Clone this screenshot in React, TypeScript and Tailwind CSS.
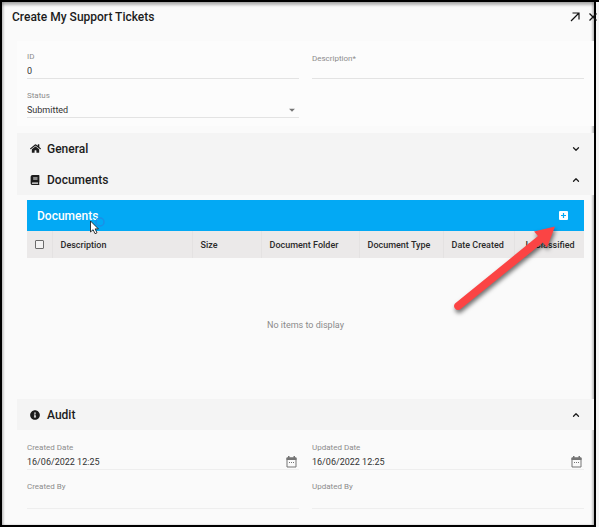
import React from "react";
import { FaHome, FaBook, FaInfoCircle } from "react-icons/fa";
import { MdArrowDropDown } from "react-icons/md";
import { ChevronDown, ChevronUp } from "lucide-react";

const labelClass = "block h-3 text-[8px] leading-3 text-[#8c8c8c]";
const valueClass =
  "w-full min-w-0 bg-transparent p-0 text-[9px] leading-4 text-[#333] outline-none";

function CalendarIcon() {
  return (
    <svg width="11" height="12" viewBox="0 0 11 12" fill="none" aria-hidden="true">
      <path d="M1 2H10V11H1Z" stroke="#757575" />
      <path d="M0.500 1.500H10.500V4H0.500ZM2 0H3.500V2H2ZM7.500 0H9V2H7.500Z" fill="#757575" />
      <path d="M3 6H4V7H3ZM5 6H6V7H5ZM7 6H8V7H7Z" fill="#757575" />
    </svg>
  );
}

function AddIcon() {
  return (
    <svg width="9" height="9" viewBox="0 0 9 9" aria-hidden="true">
      <rect width="9" height="9" rx="1" fill="#fff" />
      <path d="M4.500 2V7M2 4.500H7" stroke="#03a9f4" strokeWidth="1.200" />
    </svg>
  );
}

type FieldProps = {
  id: string;
  label: string;
  value?: string;
  date?: boolean;
  faint?: boolean;
};

function Field({ id, label, value = "", date = false, faint = false }: FieldProps) {
  return (
    <div
      className={`flex h-7 flex-col border-b ${faint ? "border-[#eeeeee]" : "border-[#e3e3e3]"}`}
    >
      <label htmlFor={id} className={labelClass}>
        {label}
      </label>
      <div className="flex h-4 items-center">
        <input id={id} type="text" defaultValue={value} className={valueClass} />
        {date && (
          <button type="button" aria-label={`Choose ${label}`} className="pr-0.5">
            <CalendarIcon />
          </button>
        )}
      </div>
    </div>
  );
}

type SectionProps = {
  title: string;
  icon: React.ReactNode;
  open: boolean;
};

function SectionHeader({ title, icon, open }: SectionProps) {
  return (
    <h2>
      <button
        type="button"
        aria-expanded={open}
        className="flex h-[31px] w-full items-center bg-[#f4f4f4] px-[13px] text-left text-[12px] font-medium text-[#1c1c1c]"
      >
        <span className="flex w-[17px] items-center">{icon}</span>
        <span className="flex-1">{title}</span>
        {open ? <ChevronUp size={10} strokeWidth={3} /> : <ChevronDown size={10} strokeWidth={3} />}
      </button>
    </h2>
  );
}

const columns = [
  { name: "Description", width: "w-[140px]" },
  { name: "Size", width: "w-[69px]" },
  { name: "Document Folder", width: "w-[98px]" },
  { name: "Document Type", width: "w-[84px]" },
  { name: "Date Created", width: "w-[71px]" },
  { name: "Is Classified", width: "" },
];

function DocumentsTable() {
  return (
    <div className="mx-[10px] mt-[5px]">
      <div className="flex h-[31px] items-center justify-between bg-[#03a9f4] px-4 pl-[10px] text-white">
        <h3 className="text-[12px] font-medium">Documents</h3>
        <button type="button" aria-label="Add document">
          <AddIcon />
        </button>
      </div>
      <table className="w-full table-fixed border-collapse text-left">
        <thead>
          <tr className="h-[27px] bg-[#ebe9e9] text-[9px] font-medium text-[#2b2b2b]">
            <th className="w-[25px] p-0">
              <input
                type="checkbox"
                aria-label="Select all documents"
                className="mx-auto block size-[9px] appearance-none rounded-[1px] border border-[#6b6b6b] bg-[#f3f2f2]"
              />
            </th>
            {columns.map((c) => (
              <th
                key={c.name}
                scope="col"
                className={`border-l border-[#e4e2e2] p-0 pt-0.5 pl-2 font-medium whitespace-nowrap last:pl-[11px] ${c.width}`}
              >
                {c.name}
              </th>
            ))}
          </tr>
        </thead>
        <tbody>
          <tr>
            <td colSpan={7} className="h-[135px] text-center text-[9px] text-[#8a8a8a]">
              No items to display
            </td>
          </tr>
        </tbody>
      </table>
    </div>
  );
}

function Cursor() {
  return (
    <svg
      className="pointer-events-none absolute top-[211px] left-[87px]"
      width="20"
      height="24"
      viewBox="0 0 20 24"
      aria-hidden="true"
    >
      <circle cx="11" cy="9" r="4" fill="none" stroke="#1c8fe6" strokeWidth="1.500" />
      <path
        d="M1.500 8v11l2.600-2.300 1.900 4 2-.9-1.900-3.900h3.300z"
        fill="#fff"
        stroke="#222"
        strokeWidth="0.900"
      />
    </svg>
  );
}

function PointerArrow() {
  return (
    <svg
      className="pointer-events-none absolute top-[215px] right-[32px] drop-shadow-[1px_3px_2px_rgba(0,0,0,0.55)]"
      width="112"
      height="96"
      viewBox="0 0 112 96"
      aria-hidden="true"
    >
      <path
        d="M105 9.500L84 14.500L88 19L5 86.500Q3 89 5 91.500Q7 94 10 92.500L93 25.500L97 30.500Z"
        fill="#fb4444"
      />
    </svg>
  );
}

export default function App() {
  return (
    <div className="border-t-2 border-black bg-[#f4f4f4] font-['Roboto',sans-serif]">
      <main className="relative mr-[3px] border-r-2 border-b-2 border-l-2 border-black bg-[#fafafa] pb-4 shadow-[inset_0_3px_3px_rgba(0,0,0,0.28),inset_-2px_0_2px_rgba(0,0,0,0.15),inset_2px_0_2px_rgba(0,0,0,0.12)]">
        <header className="flex h-[30px] items-center pl-[10px]">
          <h1 className="flex-1 text-[12px] font-medium text-[#1c1c1c]">
            Create My Support Tickets
          </h1>
          <button type="button" aria-label="Open in full page" className="mr-2">
            <svg width="10" height="10" viewBox="0 0 10 10" fill="none" stroke="#111" strokeWidth="1.200">
              <path d="M1 9L9 1M2.500 1H9V7.500" />
            </svg>
          </button>
          <button type="button" aria-label="Close" className="relative -mr-1">
            <svg width="10" height="10" viewBox="0 0 10 10" fill="none" stroke="#111" strokeWidth="1.300">
              <path d="M1.500 1.500L8.500 8.500M8.500 1.500L1.500 8.500" />
            </svg>
          </button>
        </header>

        <form className="mt-[9px] ml-[15px]">
          <section className="grid grid-cols-2 gap-x-[13px] gap-y-[11px] bg-[#fcfcfc] px-[10px] pt-[10px] pb-2">
            <Field id="ticket-id" label="ID" value="0" />
            <div className="grid h-7 border-b border-[#e3e3e3]">
              <label
                htmlFor="description"
                className="col-start-1 row-start-1 h-4 text-[8px] leading-4 text-[#8c8c8c]"
              >
                Description*
              </label>
              <input id="description" type="text" className={`col-start-1 row-start-1 ${valueClass}`} />
            </div>
            <div className="h-7 border-b border-[#e3e3e3]">
              <label htmlFor="status" className={labelClass}>
                Status
              </label>
              <div className="grid h-4 items-center">
                <select
                  id="status"
                  className={`col-start-1 row-start-1 appearance-none ${valueClass}`}
                  defaultValue="Submitted"
                >
                  <option>Submitted</option>
                </select>
                <MdArrowDropDown
                  size={14}
                  className="pointer-events-none col-start-1 row-start-1 justify-self-end text-[#757575]"
                />
              </div>
            </div>
          </section>

          <div className="mt-[7px]">
            <SectionHeader title="General" icon={<FaHome size={11} />} open={false} />
            <SectionHeader title="Documents" icon={<FaBook size={10} />} open />
          </div>
          <DocumentsTable />

          <div className="mt-[6px]">
            <SectionHeader title="Audit" icon={<FaInfoCircle size={10} />} open />
            <section className="grid grid-cols-2 gap-x-[13px] gap-y-[11px] px-[10px] pt-3">
              <Field id="created-date" label="Created Date" value="16/06/2022 12:25" date faint />
              <Field id="updated-date" label="Updated Date" value="16/06/2022 12:25" date faint />
              <Field id="created-by" label="Created By" faint />
              <Field id="updated-by" label="Updated By" faint />
            </section>
          </div>
        </form>

        <Cursor />
        <PointerArrow />
      </main>
    </div>
  );
}
